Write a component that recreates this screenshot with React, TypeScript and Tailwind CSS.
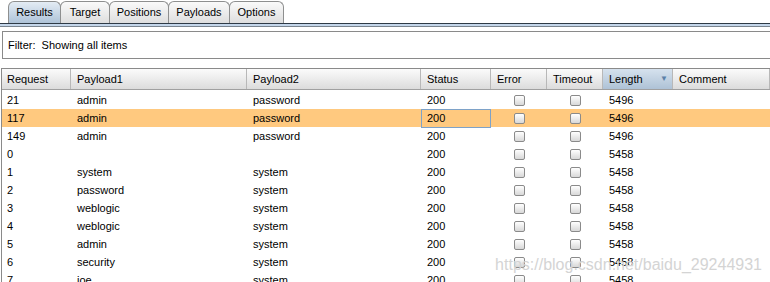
import React from 'react'

const tabs = ['Results', 'Target', 'Positions', 'Payloads', 'Options']

const columns = ['Request', 'Payload1', 'Payload2', 'Status', 'Error', 'Timeout', 'Length', 'Comment']

const rows = [
  ['21', 'admin', 'password', '200', '5496'],
  ['117', 'admin', 'password', '200', '5496'],
  ['149', 'admin', 'password', '200', '5496'],
  ['0', '', '', '200', '5458'],
  ['1', 'system', 'system', '200', '5458'],
  ['2', 'password', 'system', '200', '5458'],
  ['3', 'weblogic', 'system', '200', '5458'],
  ['4', 'weblogic', 'system', '200', '5458'],
  ['5', 'admin', 'system', '200', '5458'],
  ['6', 'security', 'system', '200', '5458'],
  ['7', 'joe', 'system', '200', '5458'],
]

const grid = 'grid grid-cols-[69px_176px_174px_70px_56px_56px_70px_1fr]'

function Check() {
  return (
    <span className="block w-[11px] h-[11px] rounded-[2px] border border-[#8a8a8a] bg-gradient-to-b from-white to-[#d8d8d8]" />
  )
}

export default function App() {
  return (
    <div className="relative w-[770px] h-[282px] overflow-hidden bg-white text-[11px] text-black font-['Liberation_Sans',Arial,sans-serif]">
      {/* ── Tab strip ── */}
      <div className="flex h-[23px] pl-[8px] items-end">
        {tabs.map((t, i) => (
          <div
            key={t}
            className={
              'h-[22px] flex items-center justify-center border border-b-0 border-[#8e8f8f] rounded-t-[6px] -ml-px first:ml-0 ' +
              (i === 0
                ? 'bg-gradient-to-b from-[#e4ecf4] to-[#aec3d8] w-[53px]'
                : 'bg-gradient-to-b from-[#fafafa] to-[#dedede]') +
              (i === 1 ? ' w-[50px]' : '') +
              (i === 2 ? ' w-[60px]' : '') +
              (i === 3 ? ' w-[62px]' : '') +
              (i === 4 ? ' w-[55px]' : '')
            }
          >
            {t}
          </div>
        ))}
      </div>
      <div className="h-px bg-[#2e3a46]" />
      <div className="h-[2px] bg-[#c4d6ea]" />
      <div className="h-px bg-[#7a8590]" />

      {/* ── Filter bar ── */}
      <div className="pt-[4px] pl-[2px]">
        <div className="h-[28px] flex items-center pl-[5px] border border-[#8a8a8a] border-r-0 bg-white">
          Filter:&nbsp; Showing all items
        </div>
      </div>

      {/* ── Results table ── */}
      <div className="mt-[9px] border-l border-t border-[#8a8a8a] ml-[1px]">
        <div className={grid + ' h-[21px] border-b border-[#a0a0a0]'}>
          {columns.map((c, i) => (
            <div
              key={c}
              className={
                'flex items-center border-r border-[#b8b8b8] ' +
                (i === 0 ? 'pl-[5px] ' : 'pl-[6px] ') +
                (c === 'Length'
                  ? 'bg-gradient-to-b from-[#d6e2ee] to-[#aec2d6] justify-between pr-[4px]'
                  : 'bg-gradient-to-b from-[#fbfbfb] to-[#dcdcdc]')
              }
            >
              {c}
              {c === 'Length' && <span className="text-[8px] text-[#5b80a8]">▼</span>}
            </div>
          ))}
        </div>
        <div className="h-px" />

        {rows.map((r, i) => (
          <div key={i} className={grid + ' h-[18px] ' + (i === 1 ? 'bg-[#ffc97f]' : '')}>
            <div className="flex items-center pl-[5px]">{r[0]}</div>
            <div className="flex items-center pl-[6px]">{r[1]}</div>
            <div className="flex items-center pl-[6px]">{r[2]}</div>
            <div className={'flex items-center ' + (i === 1 ? 'border border-[#7ea2c8] pl-[5px]' : 'pl-[6px]')}>
              {r[3]}
            </div>
            <div className="flex items-center justify-center">
              <Check />
            </div>
            <div className="flex items-center justify-center">
              <Check />
            </div>
            <div className="flex items-center pl-[6px]">{r[4]}</div>
            <div />
          </div>
        ))}
      </div>

      {/* watermark */}
      <div className="absolute right-[8px] top-[253px] text-[16px] text-[#d4d4d4] pointer-events-none">
        https://blog.csdn.net/baidu_29244931
      </div>
    </div>
  )
}
